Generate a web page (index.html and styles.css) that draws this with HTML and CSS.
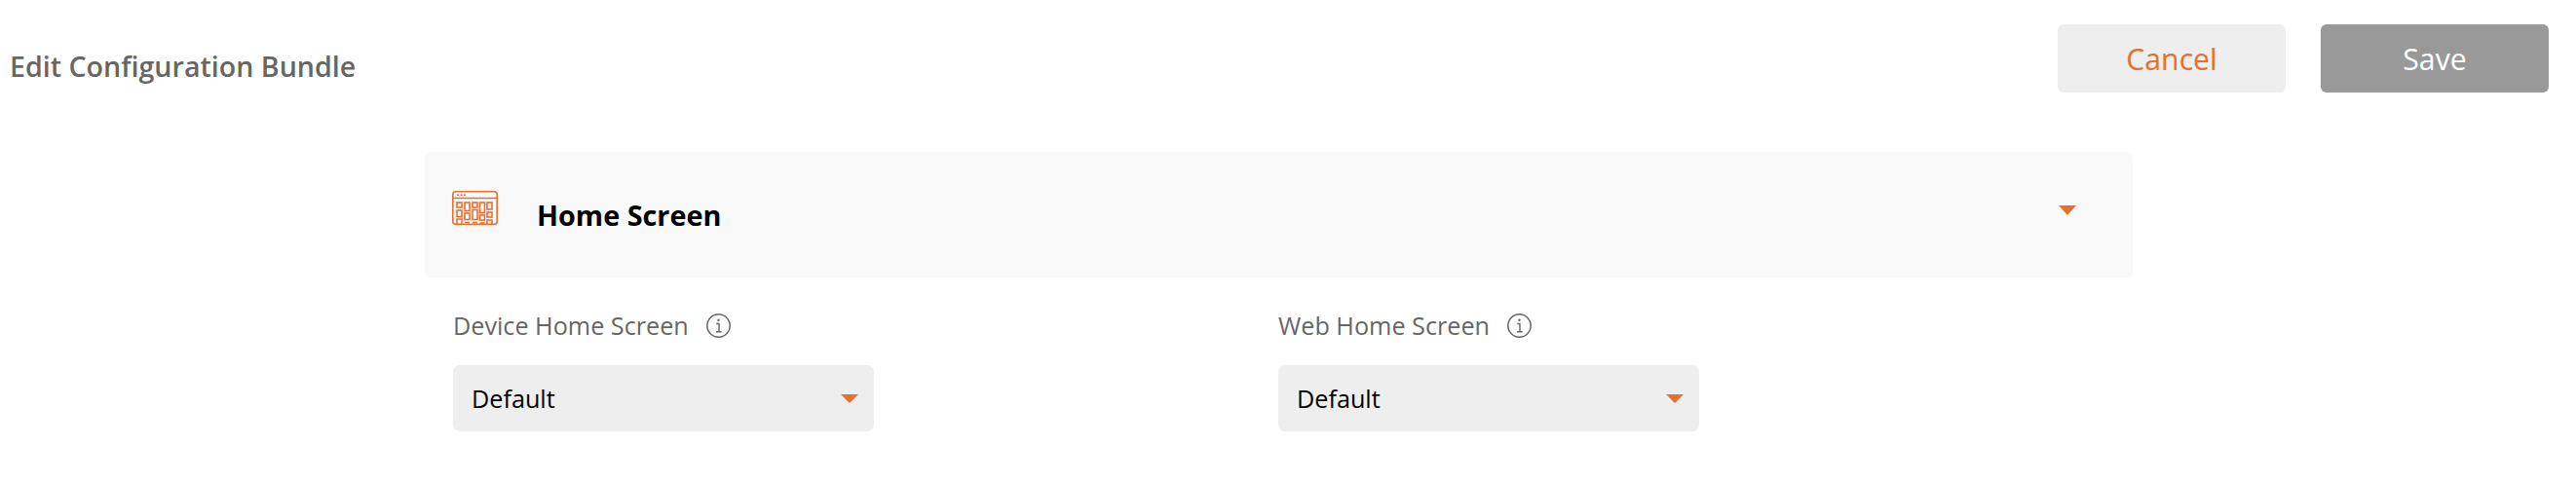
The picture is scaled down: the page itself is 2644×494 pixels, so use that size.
FILE: index.html
```html
<!DOCTYPE html>
<html lang="en">
<head>
<meta charset="utf-8">
<title>Edit Configuration Bundle</title>
<link rel="stylesheet" href="styles.css">
</head>
<body>
<header class="topbar">
  <h1 class="page-title">Edit Configuration Bundle</h1>
  <div class="actions">
    <button class="btn btn-cancel" type="button">Cancel</button>
    <button class="btn btn-save" type="button">Save</button>
  </div>
</header>
<main class="content">
  <section class="panel">
    <svg class="panel-icon" viewBox="0 0 47 35" fill="none" stroke="#e96f30" stroke-width="1.6">
      <rect x="0.8" y="0.8" width="45.4" height="33.4" rx="3"/>
      <path d="M1 7.500h45"/>
      <path d="M5 4.200h2M8.500 4.200h2M12 4.200h2" stroke-width="1.6"/>
      <rect x="5" y="12" width="5" height="5"/>
      <rect x="5" y="20" width="5" height="6.500"/>
      <path d="M5 34v-5h5v5"/>
      <rect x="13" y="12" width="5" height="8.500"/>
      <rect x="13" y="23" width="5" height="6.500"/>
      <path d="M13 32.500h5"/>
      <rect x="21" y="12" width="5" height="5"/>
      <rect x="21" y="19.500" width="5" height="10"/>
      <path d="M21 32.500h5"/>
      <rect x="28.500" y="12" width="5" height="10.500"/>
      <rect x="28.500" y="25" width="5" height="5"/>
      <path d="M28.500 33h5"/>
      <rect x="36" y="12" width="5" height="7"/>
      <rect x="36" y="22" width="5" height="5"/>
      <path d="M36 34v-4h5v4"/>
    </svg>
    <h2 class="panel-title">Home Screen</h2>
    <span class="caret caret-panel"></span>
  </section>
  <div class="fields">
    <div class="field">
      <div class="field-label">
        <span>Device Home Screen</span>
        <svg class="info" viewBox="0 0 25 25" fill="none" stroke="#666" stroke-width="1.5">
          <circle cx="12.500" cy="12.500" r="11.700"/>
          <path d="M10.300 10.500h2.700v8M10 18.700h5.600" stroke-width="1.4"/>
          <circle cx="12.500" cy="6.800" r="1.200" fill="#666" stroke="none"/>
        </svg>
      </div>
      <div class="select"><span>Default</span><span class="caret"></span></div>
    </div>
    <div class="field">
      <div class="field-label">
        <span>Web Home Screen</span>
        <svg class="info" viewBox="0 0 25 25" fill="none" stroke="#666" stroke-width="1.5">
          <circle cx="12.500" cy="12.500" r="11.700"/>
          <path d="M10.300 10.500h2.700v8M10 18.700h5.600" stroke-width="1.4"/>
          <circle cx="12.500" cy="6.800" r="1.200" fill="#666" stroke="none"/>
        </svg>
      </div>
      <div class="select"><span>Default</span><span class="caret"></span></div>
    </div>
  </div>
</main>
</body>
</html>
```
FILE: styles.css
```css
* { box-sizing: border-box; }
html, body { margin: 0; padding: 0; background: #fff; }
body {
  height: 494px;
  overflow: hidden;
  font-family: "Open Sans", "Liberation Sans", sans-serif;
}
.topbar {
  display: flex;
  align-items: flex-start;
  justify-content: space-between;
  padding: 25px 28px 0 10px;
  height: 156px;
}
.page-title {
  margin: 24px 0 0;
  font-size: 28.6px;
  line-height: 37px;
  font-weight: 600;
  color: #666;
}
.actions { display: flex; gap: 36px; }
.btn {
  width: 234px;
  height: 70px;
  border: 0;
  border-radius: 6px;
  font-family: inherit;
  font-size: 30.2px;
  font-weight: 400;
}
.btn-cancel { background: #eee; color: #e96f30; }
.btn-save { background: #999; color: #fff; }
.content { margin-left: 436px; width: 1753px; }
.panel {
  position: relative;
  display: flex;
  align-items: center;
  height: 129px;
  background: #f9f9f9;
  border-radius: 6px;
  padding-left: 28px;
}
.panel-icon { width: 47px; height: 35px; align-self: flex-start; margin-top: 40px; }
.panel-title {
  margin: 0 0 0 40px;
  font-size: 28.8px;
  line-height: 38px;
  font-weight: 700;
  color: #000;
}
.caret {
  display: block;
  width: 0;
  height: 0;
  border-left: 9px solid transparent;
  border-right: 9px solid transparent;
  border-top: 10px solid #e96f30;
}
.caret-panel { margin-left: auto; margin-right: 58px; margin-bottom: 10px; }
.fields { display: flex; gap: 415px; padding: 34px 0 0 29px; }
.field { width: 432px; }
.field-label {
  display: flex;
  align-items: center;
  gap: 18px;
  height: 30px;
  margin-bottom: 26px;
  font-size: 25.2px;
  line-height: 30px;
  color: #666;
}
.info { width: 25px; height: 25px; margin-top: 1px; }
.select {
  display: flex;
  align-items: center;
  justify-content: space-between;
  height: 68px;
  padding: 0 16px 0 19px;
  background: #eee;
  border-radius: 7px;
  font-size: 25.2px;
  color: #000;
}
.select .caret { border-top-width: 9px; }
```
